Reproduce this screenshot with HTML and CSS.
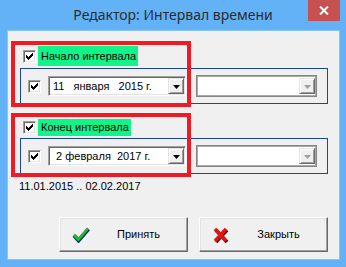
FILE: index.html
```html
<!DOCTYPE html>
<html lang="ru">
<head>
<meta charset="utf-8">
<title>Редактор: Интервал времени</title>
<link rel="stylesheet" href="styles.css">
</head>
<body>
<div class="window">
  <div class="titlebar">
    <div class="title">Редактор: Интервал времени</div>
    <div class="close"><svg width="10" height="9" viewBox="0 0 10 9"><path d="M1 0.5 L9 8.5 M9 0.5 L1 8.5" stroke="#fff" stroke-width="2" fill="none"/></svg></div>
  </div>
  <div class="client">
    <section class="group g1">
      <div class="head">
        <span class="cb"><svg width="9" height="9" viewBox="0 0 9 9"><path transform="translate(1 1)" d="M0 2H1V3H2V4H3V3H4V2H5V1H6V0H7V3H6V4H5V5H4V6H3V7H2V6H1V5H0Z" fill="#000"/></svg></span>
        <span class="label">Начало интервала</span>
      </div>
      <div class="box">
        <span class="cb"><svg width="9" height="9" viewBox="0 0 9 9"><path transform="translate(1 1)" d="M0 2H1V3H2V4H3V3H4V2H5V1H6V0H7V3H6V4H5V5H4V6H3V7H2V6H1V5H0Z" fill="#000"/></svg></span>
        <div class="combo"><span class="value">11   января   2015 г.</span><span class="dd"><svg width="7" height="4" viewBox="0 0 7 4"><path d="M0 0H7L3.5 4Z" fill="#000"/></svg></span></div>
        <div class="combo empty"><span class="dd dis"><svg width="7" height="4" viewBox="0 0 7 4"><path d="M0 0H7L3.5 4Z" fill="#a0a0a0"/></svg></span></div>
      </div>
      <div class="mark"></div>
    </section>
    <section class="group g2">
      <div class="head">
        <span class="cb"><svg width="9" height="9" viewBox="0 0 9 9"><path transform="translate(1 1)" d="M0 2H1V3H2V4H3V3H4V2H5V1H6V0H7V3H6V4H5V5H4V6H3V7H2V6H1V5H0Z" fill="#000"/></svg></span>
        <span class="label">Конец интервала</span>
      </div>
      <div class="box">
        <span class="cb"><svg width="9" height="9" viewBox="0 0 9 9"><path transform="translate(1 1)" d="M0 2H1V3H2V4H3V3H4V2H5V1H6V0H7V3H6V4H5V5H4V6H3V7H2V6H1V5H0Z" fill="#000"/></svg></span>
        <div class="combo"><span class="value"> 2 февраля  2017 г.</span><span class="dd"><svg width="7" height="4" viewBox="0 0 7 4"><path d="M0 0H7L3.5 4Z" fill="#000"/></svg></span></div>
        <div class="combo empty"><span class="dd dis"><svg width="7" height="4" viewBox="0 0 7 4"><path d="M0 0H7L3.5 4Z" fill="#a0a0a0"/></svg></span></div>
      </div>
      <div class="mark"></div>
    </section>
    <div class="range">11.01.2015 .. 02.02.2017</div>
    <div class="buttons">
      <div class="btn">
        <svg class="ico" width="18" height="16" viewBox="0 0 18 16">
          <polyline points="2,8.5 6.5,13.5 16.5,2" fill="none" stroke="#0b2a6e" stroke-width="4"/>
          <polyline points="1.8,8 6.3,12.6 16,1.5" fill="none" stroke="#1fbf2a" stroke-width="2.6"/>
        </svg>
        <span class="cap">Принять</span>
      </div>
      <div class="btn">
        <svg class="ico" width="18" height="16" viewBox="0 0 18 16">
          <path d="M4 3 L15 15 M15 3 L4 15" stroke="#5a0000" stroke-width="3.6" fill="none"/>
          <path d="M3 2 L14 14 M14 2 L3 14" stroke="#e01414" stroke-width="3.4" fill="none"/>
        </svg>
        <span class="cap">Закрыть</span>
      </div>
    </div>
  </div>
</div>
</body>
</html>
```
FILE: styles.css
```css
* { box-sizing: border-box; }
html, body { margin: 0; padding: 0; }
body {
  width: 346px;
  height: 267px;
  overflow: hidden;
  background: #63b2f7;
  font-family: "Liberation Sans", Arial, sans-serif;
  font-size: 11px;
  color: #000;
}
.window {
  width: 346px;
  height: 267px;
  display: flex;
  flex-direction: column;
}
.titlebar {
  height: 30px;
  display: grid;
  grid-template-columns: 1fr auto 1fr;
  align-items: start;
}
.title {
  grid-column: 2;
  margin-top: 5px;
  font-family: "Noto Sans", sans-serif;
  font-size: 14px;
  line-height: 19px;
  color: #2b2b2b;
  white-space: nowrap;
}
.close {
  grid-column: 3;
  justify-self: end;
  width: 32px;
  height: 21px;
  margin-right: 6px;
  background: #c75050;
  display: flex;
  align-items: center;
  justify-content: center;
}
.client {
  margin: 0 6px 0 7px;
  height: 230px;
  border: 1px solid #86c3f7;
  background: #f0f0f0;
  padding: 15px 0 0 12px;
}
.group {
  position: relative;
  width: 308px;
}
.g2 { margin-top: 15px; }
.head {
  display: flex;
  align-items: center;
  height: 20px;
  margin-bottom: 2px;
  padding-left: 3px;
}
.g2 .head { height: 17px; }
.cb {
  width: 13px;
  height: 13px;
  flex: none;
  background: #fff;
  border: 1px solid;
  border-color: #a0a0a0 #fff #fff #a0a0a0;
  box-shadow: inset 1px 1px #696969, inset -1px -1px #e3e3e3;
  padding: 1px;
  display: flex;
}
.cb svg { display: block; }
.label {
  margin-left: 2px;
  height: 100%;
  padding: 0 2px 0 3px;
  background: #10f48a;
  display: flex;
  align-items: center;
  line-height: 13px;
  white-space: nowrap;
}
.box {
  height: 36px;
  border: 1px solid #1b4696;
  display: flex;
  align-items: center;
  padding-left: 7px;
}
.combo {
  margin-left: 7px;
  width: 138px;
  height: 20px;
  background: #fff;
  border: 1px solid;
  border-color: #a0a0a0 #fff #fff #a0a0a0;
  box-shadow: inset 1px 1px #696969, inset -1px -1px #e3e3e3;
  padding: 1px;
  display: flex;
}
.value {
  flex: 1;
  padding-left: 3px;
  line-height: 16px;
  white-space: pre;
}
.dd {
  width: 16px;
  height: 16px;
  flex: none;
  background: #f0f0f0;
  border: 1px solid;
  border-color: #e3e3e3 #696969 #696969 #e3e3e3;
  box-shadow: inset 1px 1px #fff, inset -1px -1px #a0a0a0;
  display: flex;
  align-items: center;
  justify-content: center;
}
.dd svg { display: block; margin-top: 1px; }
.combo.empty {
  margin-left: 10px;
  width: 121px;
  height: 22px;
  border: 1px solid #858585;
  box-shadow: inset 0 0 0 1px #a9a9a9;
  padding: 2px 1px;
  justify-content: flex-end;
}
.mark {
  position: absolute;
  left: -9px;
  top: -5px;
  width: 180px;
  height: 66px;
  border: 4px solid #ed1c24;
  pointer-events: none;
}
.g2 .mark {
  top: -6px;
  height: 64px;
}
.range {
  margin-top: 6px;
  margin-left: -1px;
  line-height: 13px;
}
.buttons {
  width: 308px;
  margin-top: 24px;
  display: flex;
  justify-content: flex-end;
  gap: 11px;
}
.btn {
  width: 129px;
  height: 35px;
  display: flex;
  align-items: center;
  padding-left: 12px;
  background: #f0f0f0;
  border: 1px solid;
  border-color: #fff #696969 #696969 #fff;
  box-shadow: inset -1px -1px #a0a0a0, inset 1px 1px #e3e3e3;
}
.ico { display: block; flex: none; }
.cap {
  flex: 1;
  text-align: center;
  line-height: 13px;
}
```
